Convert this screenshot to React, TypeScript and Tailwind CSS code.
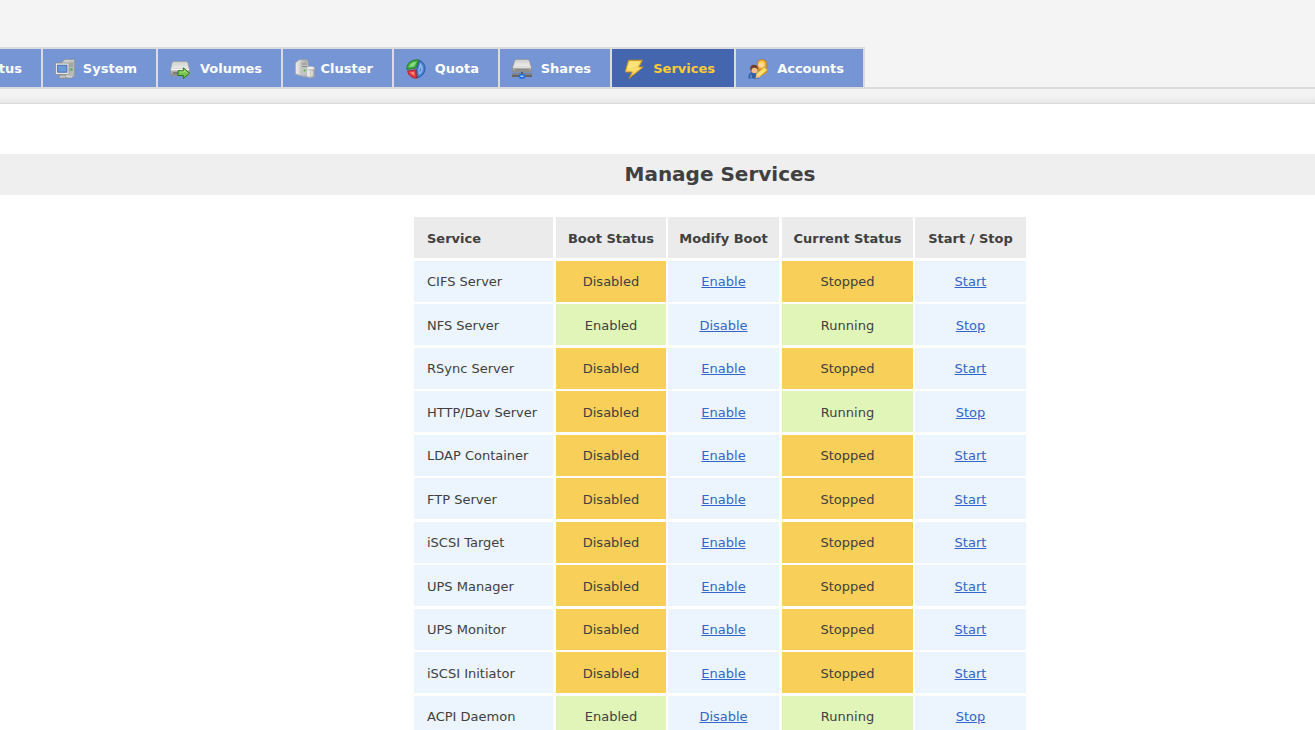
import type { ReactNode } from "react";

const defs = (
  <svg width="0" height="0" className="absolute" aria-hidden="true">
    <defs>
      <linearGradient id="metal" x1="0" y1="0" x2="0" y2="1">
        <stop offset="0" stopColor="#e4e4e2" />
        <stop offset="0.5" stopColor="#c6c6c4" />
        <stop offset="1" stopColor="#8a8a88" />
      </linearGradient>
      <linearGradient id="lid" x1="0" y1="0" x2="0" y2="1">
        <stop offset="0" stopColor="#cfcfcd" />
        <stop offset="1" stopColor="#ececea" />
      </linearGradient>
      <linearGradient id="tower" x1="0" y1="0" x2="1" y2="0">
        <stop offset="0" stopColor="#eeeeec" />
        <stop offset="1" stopColor="#a4a4a2" />
      </linearGradient>
      <linearGradient id="gold" x1="0" y1="0" x2="0" y2="1">
        <stop offset="0" stopColor="#f3c93a" />
        <stop offset="0.5" stopColor="#fbe070" />
        <stop offset="1" stopColor="#e9a21c" />
      </linearGradient>
    </defs>
  </svg>
);

function Icon({ children }: { children: ReactNode }) {
  return (
    <svg viewBox="0 0 20 20" className="h-5 w-5 shrink-0" aria-hidden="true">
      {children}
    </svg>
  );
}

const systemIcon = (
  <Icon>
    <path d="M7 3 10 .5h9l.5 1v15l-3 2.500h-5L7 17z" fill="#cfcfcd" stroke="#898987" strokeWidth=".6" />
    <path d="M14 2h5v15h-5z" fill="#b9b9b7" />
    <path d="M15 5h3M15 7h3" stroke="#858583" strokeWidth=".8" />
    <circle cx="16.500" cy="10.500" r="1.200" fill="#35b84a" />
    <rect x=".5" y="4" width="13.500" height="11.500" rx=".8" fill="#e6e6e4" stroke="#8c8c8a" strokeWidth=".8" />
    <rect x="2.700" y="6.200" width="9.200" height="7" fill="#6c9bdc" stroke="#365f9d" strokeWidth=".8" />
    <path d="M5 16h5l1.500 3.200h-8z" fill="#c2c2c0" stroke="#777" strokeWidth=".5" />
  </Icon>
);

const volumesIcon = (
  <Icon>
    <path d="M4 2.500h12q1.700 0 2 1.700l1.500 5.800v5q0 2-2 2h-15q-2 0-2-2v-5L2 4.200q.5-1.700 2-1.700z" fill="url(#metal)" stroke="#929290" strokeWidth=".6" />
    <path d="M3.500 3.300h13l2 6h-17z" fill="url(#lid)" />
    <path d="M1 9.800h18v1.400H1z" fill="#f6f6f5" />
    <path d="M3 13h5v2H3z" fill="#7d7d7b" />
    <path d="M8 11.800h5.300V8.800l6.200 5.400-6.200 5.300v-3H8z" fill="#78c353" stroke="#27781f" strokeWidth="1" strokeLinejoin="round" />
    <path d="M9.500 13h4.800v-1.800l3 2.900" fill="none" stroke="#b6e785" strokeWidth=".8" />
  </Icon>
);

const clusterIcon = (
  <Icon>
    <path d="M.5 4 4 .8h8.500l.5 1v14.700l-3 1.500-9.500-3z" fill="url(#tower)" stroke="#a5a5a3" strokeWidth=".6" />
    <path d="M6 3.500h7v13.500l-7-1z" fill="#c6c6c4" stroke="#aaa" strokeWidth=".4" />
    <path d="M7 5h5M7 7.500h5" stroke="#858583" strokeWidth="1" />
    <circle cx="9.500" cy="11.500" r="1" fill="#48b63c" />
    <path d="M11.500 9v8.500q4 2.500 8 0V9z" fill="url(#tower)" stroke="#a5a5a3" strokeWidth=".6" />
    <ellipse cx="15.500" cy="9" rx="4" ry="1.600" fill="#efefed" stroke="#bbb" strokeWidth=".6" />
    <path d="M14 12v5M17 12v5" stroke="#f8f8f8" strokeWidth="1" />
  </Icon>
);

const quotaIcon = (
  <Icon>
    <path d="M13.500 1.200q5.700 3 5.500 8.800-.5 6.500-7.500 9L10.500 10.500z" fill="#4b82d0" stroke="#2353a0" strokeWidth=".9" strokeLinejoin="round" />
    <path d="M14.200 4q3 3 2.500 7-.7 3.500-4 5l-.5-5.500z" fill="#8db8ee" />
    <path d="M14.500 7.500 13.500 13l1.500-1.500z" fill="#356bbb" />
    <path d="M.9 10.500C.5 4 5.500.3 12.500.9q-.5 4-3 8.300z" fill="#43ab43" stroke="#237826" strokeWidth=".9" strokeLinejoin="round" />
    <path d="M3 8.200q1-5 7.500-5.500L8 7.200z" fill="#8ddb86" />
    <path d="M1.500 12.200 9.800 10.800l.7 8.400q-7-.2-9-7z" fill="#e43b3b" stroke="#a91e2d" strokeWidth=".9" strokeLinejoin="round" />
    <path d="m4 13.600 4-.8.600 4z" fill="#ff8d80" />
  </Icon>
);

const sharesIcon = (
  <Icon>
    <path d="M4.500.5h11q1.500 0 2 1.500l2 6v3.500q0 1.500-1.500 1.500H2Q.5 13 .5 11.500V8l2-6q.5-1.500 2-1.500z" fill="url(#metal)" stroke="#8a8a88" strokeWidth=".6" />
    <path d="M4 1.300h12l2 5.700H2z" fill="url(#lid)" />
    <path d="M1 7.500h18v1.200H1z" fill="#f4f4f3" />
    <path d="M3 10.800h14" stroke="#858583" strokeWidth="1.200" />
    <path d="M0 14.500h20v3.500H0z" fill="#656563" />
    <path d="M0 15.200h20" stroke="#92928f" />
    <path d="M9 13h2v3H9z" fill="#595959" />
    <path d="M7.500 15h5l1 3-1.500 1.700H8L6.500 18z" fill="#256bdd" />
    <path d="M8.500 16.500h3v1.500h-3z" fill="#9ed2ff" />
  </Icon>
);

const servicesIcon = (
  <Icon>
    <path d="M4.500 1.200h14L14.800 8h4.500L5 19.500l3.200-6.500H1.200z" fill="url(#gold)" stroke="#c78c18" strokeWidth=".9" strokeLinejoin="round" />
    <path d="M5.500 2.300h11L13.500 7 3.500 9.500z" fill="#ffeb8e" opacity=".7" />
    <path d="M2.800 11.800 14 9.200h2.500L8 15.800l2-4z" fill="#ffe06a" opacity=".7" />
  </Icon>
);

const accountsIcon = (
  <Icon>
    <path d="M8.500 10q1-3 5-3.500l5 2 .7 5-5 3z" fill="#dc8a2c" />
    <path d="M10 2q4-3.500 8 0l1 5-3 4h-5L9 7z" fill="#eaa62c" stroke="#a86a18" strokeWidth=".5" />
    <ellipse cx="13.500" cy="5.500" rx="3.200" ry="3.300" fill="#ffd99a" />
    <path d="M10.500 4q2-4 7 0-3 1-4-.5-1 1.500-3 .5z" fill="#fbd04c" />
    <path d="M.5 19.500q-.5-6.500 4.500-6.500t6 6.500z" fill="#315f9f" />
    <circle cx="6" cy="9.500" r="3.800" fill="#70402b" />
    <ellipse cx="6.500" cy="11.500" rx="3" ry="2.800" fill="#f6bd8e" />
    <path d="m8.500 14.500 8-6.500 3 3-8 7-3.500 1z" fill="#ffe06a" stroke="#c9952b" strokeWidth=".7" />
    <path d="m8.500 14.500 3 3.500-3.500 1z" fill="#f2c48c" />
    <path d="M3 15.500v4" stroke="#6b9ce0" strokeWidth="1.200" />
  </Icon>
);

const tabs = [
  { label: "System", icon: systemIcon, width: "w-[115px]" },
  { label: "Volumes", icon: volumesIcon, width: "w-[125px]" },
  { label: "Cluster", icon: clusterIcon, width: "w-[111px]" },
  { label: "Quota", icon: quotaIcon, width: "w-[106px]" },
  { label: "Shares", icon: sharesIcon, width: "w-[112px]" },
  { label: "Services", icon: servicesIcon, width: "w-[124px]", active: true },
  { label: "Accounts", icon: accountsIcon, width: "w-[129px]" },
];

const services = [
  { name: "CIFS Server", enabled: false, running: false },
  { name: "NFS Server", enabled: true, running: true },
  { name: "RSync Server", enabled: false, running: false },
  { name: "HTTP/Dav Server", enabled: false, running: true },
  { name: "LDAP Container", enabled: false, running: false },
  { name: "FTP Server", enabled: false, running: false },
  { name: "iSCSI Target", enabled: false, running: false },
  { name: "UPS Manager", enabled: false, running: false },
  { name: "UPS Monitor", enabled: false, running: false },
  { name: "iSCSI Initiator", enabled: false, running: false },
  { name: "ACPI Daemon", enabled: true, running: true },
];

function StatusCell({ on, label }: { on: boolean; label: string }) {
  return <td className={on ? "bg-[#e2f5b9]" : "bg-[#f8cf58]"}>{label}</td>;
}

function ActionCell({ label }: { label: string }) {
  return (
    <td className="bg-[#ecf5fd]">
      <a href="#" className="text-[#3366cc] underline">
        {label}
      </a>
    </td>
  );
}

export default function App() {
  return (
    <div className="h-screen overflow-hidden bg-white font-['Verdana','DejaVu_Sans',sans-serif] text-[13px] text-[#404040]">
      {defs}
      <header className="border-b border-[#d8d8d8] bg-[#f4f4f4] pt-[47px]">
        <nav className="flex border-b-2 border-[#dcdcdc] font-bold text-white">
          <a
            href="#"
            className="flex h-10 w-[43px] shrink-0 items-center justify-end overflow-hidden border-t-2 border-r-2 border-[#dcdcdc] bg-[#7595d4] pt-0.5 pr-[19px]"
          >
            Status
          </a>
          {tabs.map((tab) => (
            <a
              key={tab.label}
              href="#"
              className={`flex h-10 shrink-0 items-center justify-between border-t-2 border-r-2 border-[#dcdcdc] pt-0.5 pr-[19px] pl-3 ${tab.width} ${
                tab.active ? "bg-[#4466ae] text-[#ffcc33]" : "bg-[#7595d4]"
              }`}
            >
              {tab.icon}
              {tab.label}
            </a>
          ))}
        </nav>
        <div className="h-[14px] bg-linear-to-b from-[#f4f4f4] from-40% to-[#e8e8e8]" />
      </header>
      <main className="pt-[50px]">
        <h1 className="bg-[#efefef] pl-[125px] text-center text-xl leading-[41px] font-bold">Manage Services</h1>
        <div className="flex justify-center pt-[22px] pl-[125px]">
          <table className="w-[612px] table-fixed border-separate border-spacing-0 text-center [&_td]:h-[43px] [&_td]:border-white [&_td:nth-child(even)]:border-r-2 [&_td:nth-child(odd):not(:last-child)]:border-r-3 [&_th]:border-white [&_th:nth-child(even)]:border-r-2 [&_th:nth-child(odd):not(:last-child)]:border-r-3 [&_tr:nth-child(even)>td]:h-11 [&_tr:nth-child(even)>td]:border-b-3 [&_tr:nth-child(even)>td]:pt-0.5 [&_tr:nth-child(odd)>td]:border-b-2">
            <colgroup>
              <col className="w-[142px]" />
              <col className="w-[112px]" />
              <col className="w-[114px]" />
              <col className="w-[133px]" />
              <col className="w-[111px]" />
            </colgroup>
            <thead className="[&_th]:h-11 [&_th]:border-b-3 [&_th]:bg-[#ebebeb] [&_th]:pt-0.5">
              <tr>
                <th className="pl-[13px] text-left">Service</th>
                <th>Boot Status</th>
                <th>Modify Boot</th>
                <th>Current Status</th>
                <th>Start / Stop</th>
              </tr>
            </thead>
            <tbody>
              {services.map((service) => (
                <tr key={service.name}>
                  <td className="bg-[#ecf5fd] pl-[13px] text-left">{service.name}</td>
                  <StatusCell on={service.enabled} label={service.enabled ? "Enabled" : "Disabled"} />
                  <ActionCell label={service.enabled ? "Disable" : "Enable"} />
                  <StatusCell on={service.running} label={service.running ? "Running" : "Stopped"} />
                  <ActionCell label={service.running ? "Stop" : "Start"} />
                </tr>
              ))}
            </tbody>
          </table>
        </div>
      </main>
    </div>
  );
}
